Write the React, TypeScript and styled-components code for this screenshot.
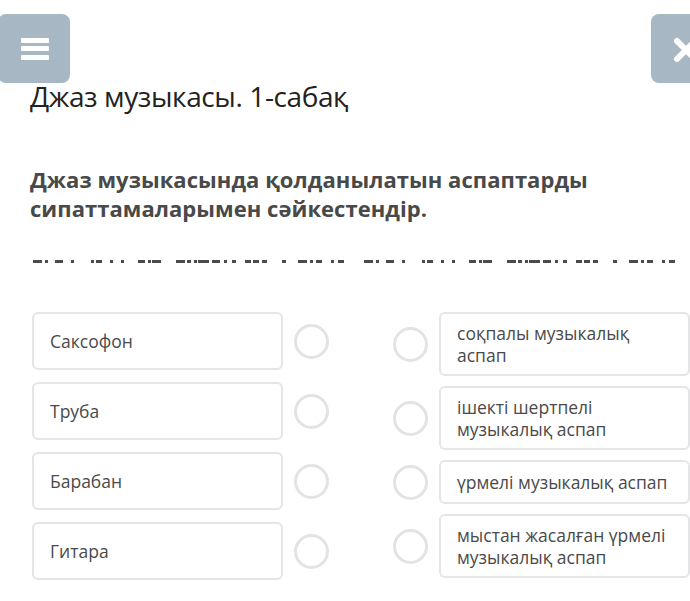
import React from "react";
import styled, { createGlobalStyle } from "styled-components";

const Global = createGlobalStyle`
  html, body { margin: 0; padding: 0; background: #fff; }
  body { font-family: "Open Sans", "Noto Sans", sans-serif; overflow: hidden; }
  * { box-sizing: border-box; }
`;

const Page = styled.div`
  position: relative;
  width: 690px;
  height: 601px;
  overflow: hidden;
  padding: 78px 0 0 30px;
`;

const FloatButton = styled.div<{ $side: "left" | "right" }>`
  position: absolute;
  top: 14px;
  ${(p) => (p.$side === "left" ? "left: -2px;" : "left: 651px;")}
  width: 72px;
  height: 69px;
  border-radius: 8px;
  background: #a7b8c4;
  display: flex;
  align-items: center;
  justify-content: center;
`;

const Burger = styled.div`
  display: flex;
  flex-direction: column;
  gap: 3.5px;
  margin-left: 2px;
  span {
    display: block;
    width: 28px;
    height: 5px;
    border-radius: 1px;
    background: #fff;
  }
`;

const CloseIcon = styled.svg`
  position: absolute;
  left: 22px;
  top: 23px;
`;

const Title = styled.h1`
  margin: 0;
  font-weight: 400;
  font-size: 28px;
  line-height: 36px;
  color: #222;
  letter-spacing: -0.4px;
`;

const Question = styled.p`
  margin: 51px 0 0 0;
  font-weight: 700;
  font-size: 22px;
  line-height: 29px;
  color: #494949;
  letter-spacing: 0.05px;
  width: 640px;
`;

const Redacted = styled.div`
  margin: 36px 0 0 3px;
  display: flex;
  gap: 18px;
  height: 6px;
`;

const Columns = styled.div`
  display: grid;
  grid-template-columns: 297px 297px;
  column-gap: 64px;
  margin: 47px 0 0 2px;
  align-items: start;
`;

const Column = styled.div<{ $gap: number }>`
  display: flex;
  flex-direction: column;
  gap: ${(p) => p.$gap}px;
`;

const Row = styled.div`
  display: flex;
  align-items: center;
  gap: 11px;
`;

const Card = styled.div<{ $tall?: boolean }>`
  width: 251px;
  flex: none;
  border: 2px solid #e3e5e6;
  border-radius: 6px;
  background: #fff;
  color: #4a4a4a;
  font-size: 17.5px;
  line-height: 22px;
  padding: ${(p) => (p.$tall ? "15px 8px 15px 16px" : "8px 16px 8px 16px")};
  min-height: ${(p) => (p.$tall ? "58px" : "44px")};
  display: flex;
  align-items: center;
`;

const Circle = styled.div`
  width: 35px;
  height: 35px;
  flex: none;
  border-radius: 50%;
  border: 3px solid #e2e4e4;
  background: #fff;
`;

const segs: [number, number][] = [
  [0, 9], [12, 3], [22, 8], [38, 3], [58, 3], [63, 6], [77, 3], [88, 3],
  [105, 7], [115, 3], [119, 9], [143, 9], [154, 4], [161, 3], [165, 11], [179, 8],
  [191, 3], [199, 4], [212, 6], [220, 6], [229, 5], [249, 4], [265, 9],
  [277, 3], [283, 6], [298, 3], [305, 6],
];

function DashLine() {
  return (
    <svg width="313" height="6" viewBox="0 0 313 6">
      {segs.map(([x, w], i) => (
        <rect key={i} x={x} y={1} width={w} height={3} fill="#4b4b4b" />
      ))}
    </svg>
  );
}

const left = ["Саксофон", "Труба", "Барабан", "Гитара"];
const right = [
  "соқпалы музыкалық аспап",
  "ішекті шертпелі музыкалық аспап",
  "үрмелі музыкалық аспап",
  "мыстан жасалған үрмелі музыкалық аспап",
];

export default function App() {
  return (
    <>
      <Global />
      <Page>
        <FloatButton $side="left">
          <Burger>
            <span />
            <span />
            <span />
          </Burger>
        </FloatButton>
        <FloatButton $side="right">
          <CloseIcon width="26" height="26" viewBox="0 0 26 26">
            <path d="M4 4 L22 22 M22 4 L4 22" stroke="#fff" strokeWidth="6" strokeLinecap="round" />
          </CloseIcon>
        </FloatButton>
        <Title>Джаз музыкасы. 1-сабақ</Title>
        <Question>
          Джаз музыкасында қолданылатын аспаптарды сипаттамаларымен сәйкестендір.
        </Question>
        <Redacted>
          <DashLine />
          <DashLine />
        </Redacted>
        <Columns>
          <Column $gap={12}>
            {left.map((t) => (
              <Row key={t}>
                <Card $tall>{t}</Card>
                <Circle />
              </Row>
            ))}
          </Column>
          <Column $gap={10}>
            {right.map((t) => (
              <Row key={t}>
                <Circle />
                <Card>{t}</Card>
              </Row>
            ))}
          </Column>
        </Columns>
      </Page>
    </>
  );
}
